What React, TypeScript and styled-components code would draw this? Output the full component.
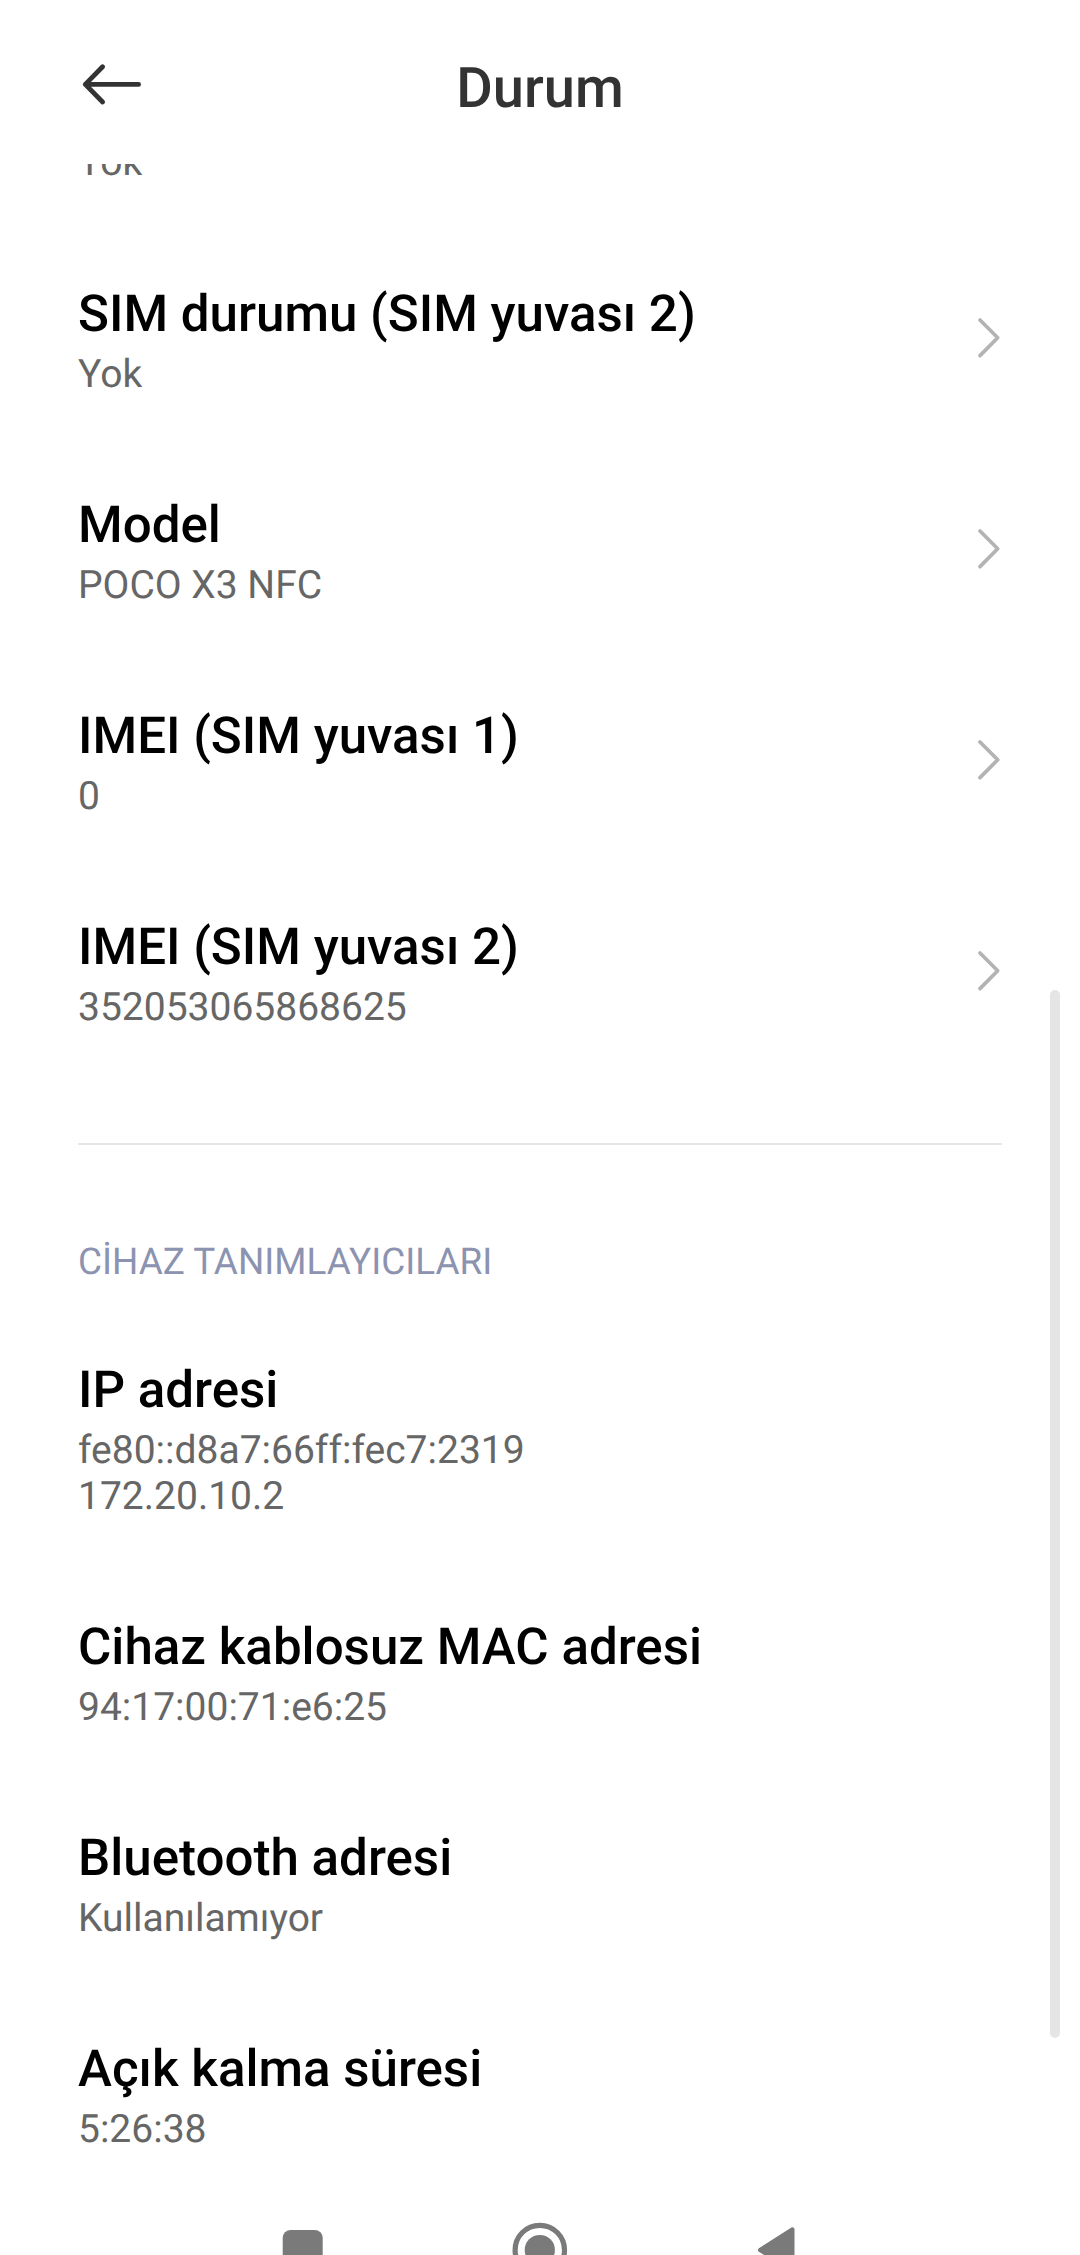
import React from "react";
import styled, { createGlobalStyle } from "styled-components";

const Global = createGlobalStyle`
  * { box-sizing: border-box; }
  body { margin: 0; background: #fff; font-family: Roboto, sans-serif; text-rendering: geometricPrecision; }
`;
const Screen = styled.div`
  width: 1080px; height: 2255px; overflow: hidden; position: relative;
  background: #fff; display: flex; flex-direction: column;
`;
const Header = styled.header`
  height: 164px; flex: none; display: grid; grid-template-columns: 78px 1fr 78px;
  padding: 0 78px;
`;
const Back = styled.svg`
  width: 66px; height: 48px; margin-top: 61px;
`;
const Title = styled.h1`
  margin: 55px 0 0; font-size: 56px; line-height: 66px; font-weight: 500; color: #333; text-align: center;
`;
const List = styled.main`
  flex: none; height: 2026px; overflow: hidden; padding: 0 78px;
`;
const Row = styled.section<{ $h?: number }>`
  height: ${(p) => p.$h ?? 211}px; display: flex; justify-content: space-between; padding-top: 49px;
`;
const Label = styled.div`
  margin-bottom: 6px; font-size: 51.1px; line-height: 60px; font-weight: 500; color: #000; white-space: nowrap;
`;
const Value = styled.span`
  display: block; font-size: 39px; line-height: 46px; color: #666; white-space: pre-line;
`;
const Clipped = styled.div`
  height: 72px; overflow: hidden; display: flex; align-items: flex-start;
  ${Value} { margin-top: -25px; }
`;
const Chevron = styled.svg`
  width: 26px; height: 44px; margin-top: 31px; flex: none;
`;
const Divider = styled.hr`
  margin: 63px 0 0; border: 0; height: 2px; background: #e5e5e5;
`;
const Section = styled.h2`
  margin: 96px 0 27px; font-size: 36.9px; line-height: 44px; font-weight: 400; color: #8c93b0;
`;
const Scrollbar = styled.div`
  position: absolute; left: 1050px; top: 990px; width: 10px; height: 1048px; border-radius: 5px; background: #e5e5e5;
`;
const Nav = styled.nav`
  flex: 1; display: flex;
  svg { display: block; }
`;

const Item = ({ label, value, arrow, h }: { label: string; value: string; arrow?: boolean; h?: number }) => (
  <Row $h={h}>
    <div><Label>{label}</Label><Value>{value}</Value></div>
    {arrow && (
      <Chevron viewBox="0 0 26 44" fill="none" stroke="#b3b3b3" strokeWidth="3.7" strokeLinecap="round" strokeLinejoin="round">
        <path d="M4 4L21.7 21.8L4 39.6" />
      </Chevron>
    )}
  </Row>
);

export default function App() {
  return (
    <Screen>
      <Global />
      <Header>
        <Back viewBox="0 0 66 48" fill="none" stroke="#333" strokeWidth="4.8" strokeLinecap="round" strokeLinejoin="round">
          <path d="M60.6 23.4H7.3M24.6 5.7L7.3 23.4L24.6 41" />
        </Back>
        <Title>Durum</Title>
      </Header>
      <List>
        <Clipped><Value>Yok</Value></Clipped>
        <Item label="SIM durumu (SIM yuvası 2)" value="Yok" arrow />
        <Item label="Model" value="POCO X3 NFC" arrow />
        <Item label="IMEI (SIM yuvası 1)" value="0" arrow />
        <Item label="IMEI (SIM yuvası 2)" value="352053065868625" arrow />
        <Divider />
        <Section>CİHAZ TANIMLAYICILARI</Section>
        <Item label="IP adresi" value={"fe80::d8a7:66ff:fec7:2319\n172.20.10.2"} h={257} />
        <Item label="Cihaz kablosuz MAC adresi" value="94:17:00:71:e6:25" />
        <Item label="Bluetooth adresi" value="Kullanılamıyor" />
        <Item label="Açık kalma süresi" value="5:26:38" />
      </List>
      <Nav>
        <svg width="1080" height="65" viewBox="0 2190 1080 65" fill="#7a7a7a">
          <rect x="282.7" y="2230" width="40" height="40" rx="8" />
          <circle cx="539.8" cy="2250" r="24.7" fill="none" stroke="#7a7a7a" strokeWidth="5.2" />
          <circle cx="539.8" cy="2250" r="15.1" />
          <path d="M792.5 2229.3V2270.7L760 2250Z" stroke="#7a7a7a" strokeWidth="4" strokeLinejoin="round" />
        </svg>
      </Nav>
      <Scrollbar />
    </Screen>
  );
}
